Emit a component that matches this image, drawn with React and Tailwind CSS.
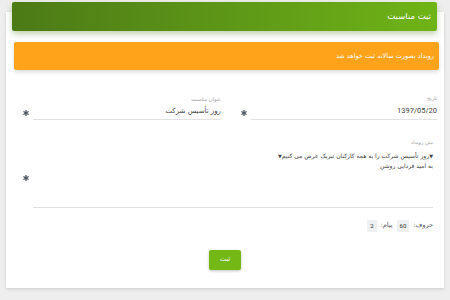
import React from "react";

const Star = () => (
  <svg width="6" height="6" viewBox="0 0 10 10" className="shrink-0">
    <g stroke="#4a5260" strokeWidth="2.2" strokeLinecap="round">
      <line x1="5" y1="1" x2="5" y2="9" />
      <line x1="1.5" y1="3" x2="8.5" y2="7" />
      <line x1="8.5" y1="3" x2="1.5" y2="7" />
    </g>
  </svg>
);

const Tri = () => <span className="text-[5px] align-middle">▼</span>;

export default function App() {
  const font = { fontFamily: '"DejaVu Sans", "Noto Sans", sans-serif' };
  const num = { fontFamily: 'Roboto, sans-serif' };
  return (
    <div className="w-[450px] h-[300px] bg-[#eeeeee] overflow-hidden pt-[12px]" style={font}>
      <div className="mx-[6px] h-[276px] bg-white shadow-[0_1px_3px_rgba(0,0,0,0.15)] flex flex-col">
        <div className="-mt-[10px] ml-[6px] mr-[7px] h-[29px] rounded-[2px] bg-gradient-to-l from-[#6fb416] to-[#4c7a16] shadow-[0_3px_6px_rgba(76,122,22,0.35)] flex items-center justify-start pr-[6px]" dir="rtl">
          <span className="text-[8.5px] text-white leading-none">ثبت مناسبت</span>
        </div>
        <div className="mt-[11px] ml-[8px] mr-[5px] h-[28px] rounded-[2px] bg-[#ffa31a] shadow-[0_2px_4px_rgba(0,0,0,0.15)] flex items-center justify-start pr-[5px]" dir="rtl">
          <span className="text-[6.5px] text-white leading-none">رویداد بصورت سالانه ثبت خواهد شد</span>
        </div>

        <div className="mt-[26px] pl-[17px] pr-[7px] flex gap-[20px]">
          <div className="w-[198px] flex items-end gap-[4px]">
            <div className="mb-[4px]"><Star /></div>
            <div className="flex-1 border-b border-[#e2e2e2] flex flex-col items-start pb-[4px]" dir="rtl">
              <span className="text-[5px] text-[#a0a0a0] leading-none">عنوان مناسبت</span>
              <span className="mt-[6px] text-[7px] text-[#444] leading-none">روز تأسیس شرکت</span>
            </div>
          </div>
          <div className="flex-1 flex items-end gap-[4px]">
            <div className="mb-[4px]"><Star /></div>
            <div className="flex-1 border-b border-[#e2e2e2] flex flex-col items-start pb-[4px]" dir="rtl">
              <span className="text-[5px] text-[#a0a0a0] leading-none">تاریخ</span>
              <span className="mt-[6px] text-[7.5px] text-[#444] leading-none" style={num}>1397/05/20</span>
            </div>
          </div>
        </div>

        <div className="mt-[20px] pl-[17px] pr-[11px] flex items-end gap-[4px]">
          <div className="mb-[27px]"><Star /></div>
          <div className="flex-1 h-[68px] border-b border-[#e2e2e2] flex flex-col items-start" dir="rtl">
            <span className="text-[5px] text-[#a0a0a0] leading-none">متن رویداد</span>
            <span className="mt-[6px] text-[6px] text-[#444] leading-[10px]"><Tri />روز تأسیس شرکت را به همه کارکنان تبریک عرض می کنیم<Tri /></span>
            <span className="text-[6px] text-[#444] leading-[10px]">به امید فردایی روشن</span>
          </div>
        </div>

        <div className="mt-[12px] pr-[11px] flex items-center gap-[4px]" dir="rtl">
          <span className="text-[6.5px] text-[#555] leading-none">حروف:</span>
          <span className="bg-[#eef0f3] px-[3px] py-[3px] text-[6px] text-[#333] leading-none" style={num}>60</span>
          <span className="text-[6.5px] text-[#555] leading-none">پیام:</span>
          <span className="bg-[#eef0f3] px-[3px] py-[3px] text-[6px] text-[#333] leading-none" style={num}>2</span>
        </div>

        <div className="mt-[18px] flex justify-center">
          <button className="w-[32px] h-[20px] rounded-[2px] bg-[#74b816] shadow-[0_1px_3px_rgba(0,0,0,0.25)] text-white text-[6.5px] leading-none flex items-center justify-center">ثبت</button>
        </div>
      </div>
    </div>
  );
}
